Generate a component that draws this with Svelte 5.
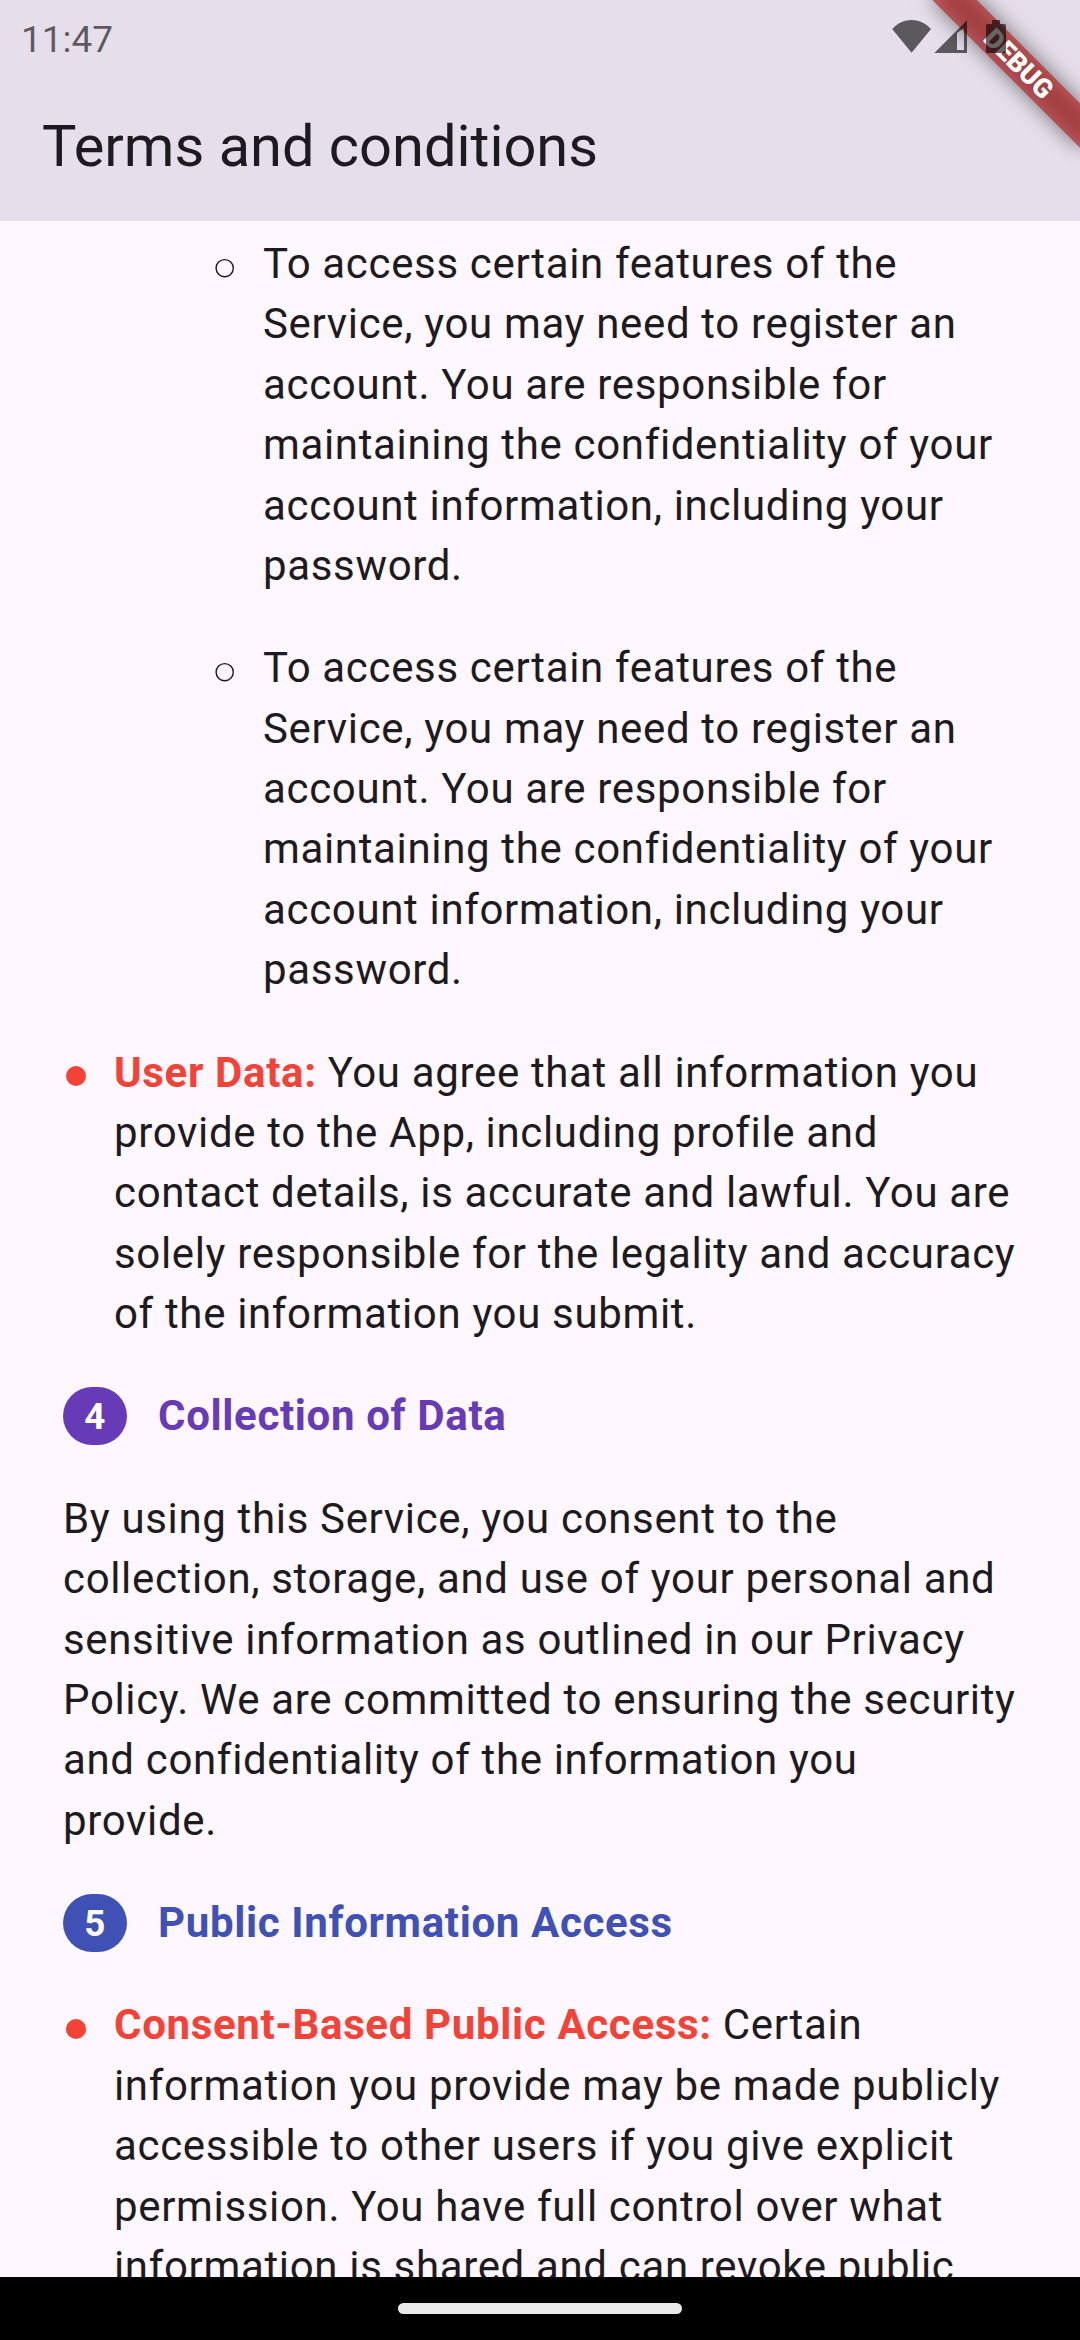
<script lang="ts">
  type Block =
    | { kind: 'sub' | 'item'; label?: string; text: string }
    | { kind: 'heading'; num: number; tone: string; text: string }
    | { kind: 'text'; text: string };

  const account =
    'To access certain features of the Service, you may need to register an account. You are responsible for maintaining the confidentiality of your account information, including your password.';

  const blocks: Block[] = [
    { kind: 'sub', text: account },
    { kind: 'sub', text: account },
    {
      kind: 'item',
      label: 'User Data:',
      text: 'You agree that all information you provide to the App, including profile and contact details, is accurate and lawful. You are solely responsible for the legality and accuracy of the information you submit.'
    },
    { kind: 'heading', num: 4, tone: 'purple', text: 'Collection of Data' },
    {
      kind: 'text',
      text: 'By using this Service, you consent to the collection, storage, and use of your personal and sensitive information as outlined in our Privacy Policy. We are committed to ensuring the security and confidentiality of the information you provide.'
    },
    { kind: 'heading', num: 5, tone: 'indigo', text: 'Public Information Access' },
    {
      kind: 'item',
      label: 'Consent-Based Public Access:',
      text: 'Certain information you provide may be made publicly accessible to other users if you give explicit permission. You have full control over what information is shared and can revoke public'
    }
  ];
</script>

<div class="screen">
  <header>
    <div class="status">
      <span class="time">11:47</span>
      <svg class="icons" width="120" height="40" viewBox="890 16 120 40">
        <path d="M892.2 29C903 17 920 17 931 29L911.600 52.700Z" />
        <path fill-rule="evenodd" d="M934.300 53L967 20.300V53ZM957 33V50H964V28Z" />
        <path d="M992 20H1000V24H1004.500Q1006 24 1006 25.500V51.500Q1006 53 1004.500 53H987.500Q986 53 986 51.500V25.500Q986 24 987.500 24H992Z" />
      </svg>
    </div>
    <h1>Terms and conditions</h1>
  </header>

  <svg class="banner" width="240" height="240" viewBox="840 0 240 240">
    <defs>
      <filter id="soft" x="-50%" y="-200%" width="200%" height="500%">
        <feGaussianBlur stdDeviation="10.4" />
      </filter>
    </defs>
    <g transform="translate(1017.500 62.900) rotate(45)">
      <rect x="-105" y="-15.750" width="210" height="31.500" fill="#000" fill-opacity=".5" filter="url(#soft)" />
      <rect x="-140" y="-15.750" width="280" height="31.500" fill="#b71c1c" fill-opacity=".627" />
      <text x="1.500" y="9" text-anchor="middle">DEBUG</text>
    </g>
  </svg>

  <main>
    {#each blocks as b}
      {#if b.kind === 'heading'}
        <h2 class={b.tone}><span class="num">{b.num}</span>{b.text}</h2>
      {:else if b.kind === 'text'}
        <p>{b.text}</p>
      {:else}
        <div class="row {b.kind}">
          <svg class="dot" width="20" height="20" viewBox="0 0 20 20">
            {#if b.kind === 'item'}
              <circle cx="10" cy="10" r="10" fill="#f44336" />
            {:else}
              <circle cx="9.700" cy="10.200" r="8.600" fill="none" stroke="#1d1b20" stroke-width="1.400" />
            {/if}
          </svg>
          <p>{#if b.label}<b>{b.label}</b>{' '}{/if}{b.text}</p>
        </div>
      {/if}
    {/each}
  </main>

  <footer><span class="pill"></span></footer>
</div>

<style>
  :global(body) {
    background: #fef7ff;
    overflow: hidden;
  }
  .screen {
    position: relative;
    width: 1080px;
    height: 2340px;
    display: flex;
    flex-direction: column;
    overflow: hidden;
    background: #fef7ff;
    color: #1d1b20;
    font-family: Roboto, sans-serif;
  }
  header {
    flex: none;
    height: 221px;
    background: #e6dfeb;
  }
  .status {
    position: relative;
    z-index: 2;
    height: 74px;
    display: flex;
    justify-content: space-between;
    padding: 0 70px 0 21px;
  }
  .time {
    font-size: 37px;
    line-height: 43px;
    padding-top: 18px;
    color: rgba(0, 0, 0, 0.6);
  }
  .icons {
    margin-top: 16px;
    fill: rgba(0, 0, 0, 0.6);
  }
  h1 {
    margin: 0;
    padding: 35px 42px 0;
    font-size: 57.75px;
    font-weight: 400;
    line-height: 74px;
  }
  .banner {
    position: absolute;
    top: 0;
    right: 0;
    z-index: 1;
  }
  .banner text {
    font-size: 26.775px;
    font-weight: 900;
    fill: #fff;
  }
  main {
    flex: 1;
    min-height: 0;
    overflow: hidden;
    display: flex;
    flex-direction: column;
    gap: 42px;
    padding: 13px 60px 0 63px;
    font-size: 42px;
    line-height: 60.375px;
    letter-spacing: 0.65625px;
  }
  p,
  h2 {
    flex: none;
    margin: 0;
  }
  .row {
    flex: none;
    display: flex;
    padding-left: 3px;
  }
  .row p {
    flex: 1;
  }
  .dot {
    flex: none;
    margin: 24px 28px 0 0;
  }
  .item .dot {
    margin-top: 23.4px;
  }
  .sub {
    padding-left: 152px;
  }
  b {
    color: #f44336;
    font-weight: 700;
  }
  h2 {
    height: 60.375px;
    display: flex;
    align-items: flex-start;
    font-size: 42px;
    font-weight: 700;
  }
  .num {
    width: 64px;
    height: 58px;
    box-sizing: border-box;
    margin: 0.6px 31px 0 0;
    border-radius: 29px;
    color: #fff;
    font-size: 36.75px;
    line-height: 59px;
    text-align: center;
  }
  .purple {
    color: #673ab7;
  }
  .purple .num {
    background: #673ab7;
  }
  .indigo {
    color: #3f51b5;
  }
  .indigo .num {
    background: #3f51b5;
  }
  footer {
    flex: none;
    height: 63px;
    display: flex;
    align-items: center;
    justify-content: center;
    background: #000;
  }
  .pill {
    width: 284px;
    height: 11px;
    border-radius: 6px;
    background: #ebebeb;
  }
</style>
